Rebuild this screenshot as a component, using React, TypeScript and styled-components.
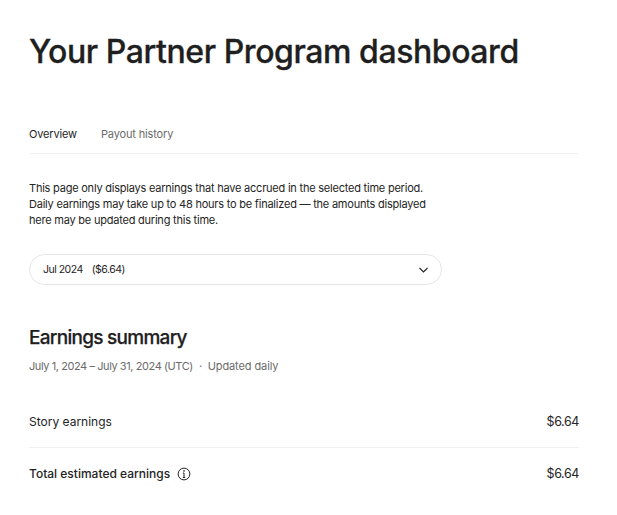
import styled, { createGlobalStyle } from "styled-components";

const GlobalStyle = createGlobalStyle`
  html, body {
    margin: 0;
    padding: 0;
    background: #fff;
  }
  body {
    font-family: Inter, "Liberation Sans", sans-serif;
    color: #242424;
  }
`;

export default function App() {
  return (
    <>
      <GlobalStyle />
      <Page>
        <Title>Your Partner Program dashboard</Title>
        <Tabs>
          <Tab $active>Overview</Tab>
          <Tab>Payout history</Tab>
        </Tabs>
        <Intro>
          This page only displays earnings that have accrued in the selected time period.
          <br />
          Daily earnings may take up to 48 hours to be finalized — the amounts displayed
          <br />
          here may be updated during this time.
        </Intro>
        <Select>
          <SelectLabel>
            <span>Jul 2024</span>
            <span>($6.64)</span>
          </SelectLabel>
          <svg width="13" height="8" viewBox="0 0 13 8" fill="none">
            <path d="M2.5 2l4 4 4-4" stroke="#242424" strokeWidth="1.1" />
          </svg>
        </Select>
        <SummaryTitle>Earnings summary</SummaryTitle>
        <Period>
          <span>July 1, 2024 – July 31, 2024 (UTC)</span>
          <span>·</span>
          <span>Updated daily</span>
        </Period>
        <Rows>
          <Row>
            <RowLabel>Story earnings</RowLabel>
            <Amount>$6.64</Amount>
          </Row>
          <Row>
            <RowLabel $strong>
              Total estimated earnings
              <svg width="14" height="14" viewBox="0 0 14 14" fill="none">
                <circle cx="7" cy="7" r="5.9" stroke="#242424" strokeWidth="1" />
                <path d="M7 6v4.2M5.8 10.4h2.4M5.9 6h1.1" stroke="#242424" strokeWidth="1" />
                <circle cx="7" cy="3.9" r="0.8" fill="#242424" />
              </svg>
            </RowLabel>
            <Amount>$6.64</Amount>
          </Row>
        </Rows>
      </Page>
    </>
  );
}

const Page = styled.main`
  width: 550px;
  margin-left: 29px;
  padding-top: 32px;
`;

const Title = styled.h1`
  margin: 0;
  font-size: 32px;
  line-height: 40px;
  font-weight: 500;
  letter-spacing: -0.43px;
  -webkit-text-stroke: 0.3px #1f1f1f;
  color: #1f1f1f;
  white-space: nowrap;
`;

const Tabs = styled.nav`
  display: flex;
  gap: 24px;
  margin-top: 52px;
  height: 29px;
  border-bottom: 1px solid #f0f0f0;
`;

const Tab = styled.a<{ $active?: boolean }>`
  font-size: 11px;
  line-height: 21px;
  letter-spacing: -0.15px;
  color: ${(p) => (p.$active ? "#242424" : "#6b6b6b")};
`;

const Intro = styled.p`
  margin: 26px 0 0;
  font-size: 11px;
  line-height: 16px;
  letter-spacing: -0.22px;
  color: #242424;
  white-space: nowrap;
`;

const Select = styled.div`
  display: flex;
  align-items: center;
  justify-content: space-between;
  box-sizing: border-box;
  width: 413px;
  height: 31px;
  margin-top: 26px;
  padding: 0 11px 0 13px;
  border: 1px solid #e6e6e6;
  border-radius: 16px;
`;

const SelectLabel = styled.div`
  display: flex;
  gap: 9px;
  font-size: 10.5px;
  letter-spacing: -0.5px;
  color: #242424;
`;

const SummaryTitle = styled.h2`
  margin: 40px 0 0;
  font-size: 19px;
  line-height: 26px;
  font-weight: 500;
  letter-spacing: -0.72px;
  -webkit-text-stroke: 0.25px #1f1f1f;
  color: #1f1f1f;
`;

const Period = styled.div`
  display: flex;
  gap: 6px;
  margin-top: 7px;
  font-size: 11px;
  line-height: 16px;
  letter-spacing: -0.42px;
  color: #6b6b6b;
  span:last-child {
    letter-spacing: -0.1px;
  }
`;

const Rows = styled.div`
  margin-top: 22px;
`;

const Row = styled.div`
  display: flex;
  align-items: center;
  justify-content: space-between;
  height: 51px;
  & + & {
    border-top: 1px solid #f0f0f0;
  }
`;

const RowLabel = styled.div<{ $strong?: boolean }>`
  display: flex;
  align-items: center;
  gap: 7px;
  font-size: 12px;
  font-weight: ${(p) => (p.$strong ? 500 : 400)};
  color: #242424;
`;

const Amount = styled.div`
  font-size: 12.5px;
  letter-spacing: -0.4px;
  color: #242424;
`;
